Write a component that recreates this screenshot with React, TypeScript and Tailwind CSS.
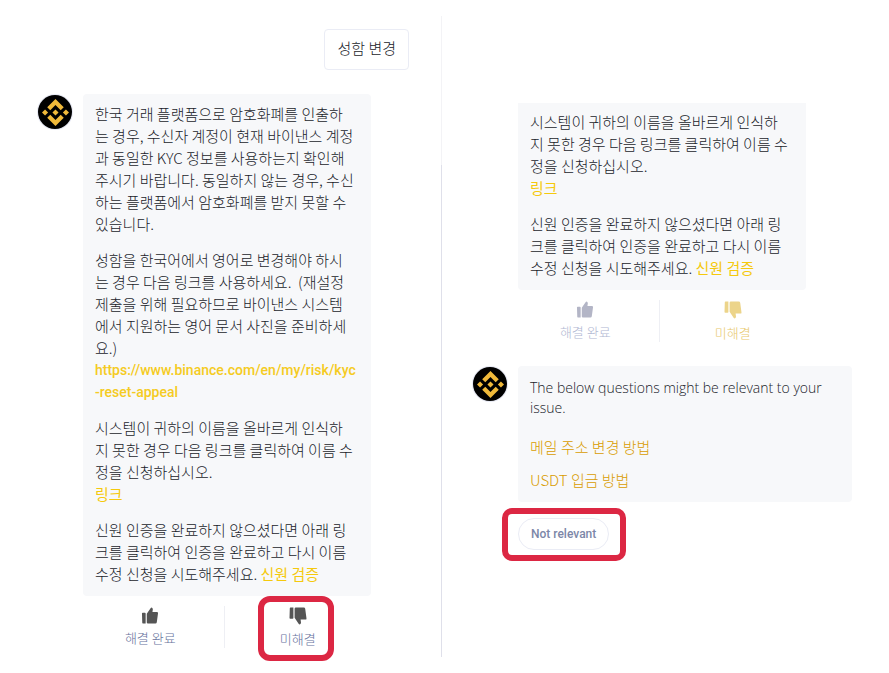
import React from "react";
import { SiBinance } from "react-icons/si";

const Avatar: React.FC = () => (
  <div className="w-9 h-9 shrink-0 rounded-full bg-[#e6e8f3] p-px">
    <div className="w-full h-full rounded-full bg-black flex items-center justify-center">
      <SiBinance size={27} className="text-[#f0b93a]" />
    </div>
  </div>
);

const Thumb: React.FC<{ down?: boolean }> = ({ down }) => (
  <svg viewBox="0 0 18 18" width="18" height="18" fill="currentColor" className={down ? "-scale-y-100" : ""} aria-hidden="true">
    <path d="M0.5 7Q0.5 6.2 1.3 6.2H3.6Q4.4 6.2 4.4 7V17.5H1.5Q0.8 17.5 0.8 16.8Z" />
    <path d="M5.6 7.2L9.6 1.3Q10.6 0 11.6 1.2Q12 1.7 12 2.4L11.6 5.4H16.4Q17.6 5.4 17.5 6.6L16.2 16.2Q16 17.5 14.8 17.5H6.8Q5.6 17.5 5.6 16.3Z" />
  </svg>
);

const linkClass = "text-[#f5c90c] font-normal";

const NameNotice: React.FC = () => (
  <>
    <p>
      시스템이 귀하의 이름을 올바르게 인식하
      <br />지 못한 경우 다음 링크를 클릭하여 이름 수
      <br />정을 신청하십시오.
      <br />
      <a href="#name" className={linkClass}>링크</a>
    </p>
    <p>
      신원 인증을 완료하지 않으셨다면 아래 링
      <br />크를 클릭하여 인증을 완료하고 다시 이름
      <br />수정 신청을 시도해주세요. <a href="#identity" className={linkClass}>신원 검증</a>
    </p>
  </>
);

type FeedbackProps = {
  upClass: string;
  downClass: string;
  highlight?: boolean;
};

const Feedback: React.FC<FeedbackProps> = ({ upClass, downClass, highlight }) => (
  <div className="mt-[10px] flex h-[42px] w-[282px] text-[13px] leading-5">
    <button type="button" className={`flex flex-1 flex-col items-center gap-1 pt-px pr-1.5 ${upClass}`}>
      <Thumb />
      <span>해결 완료</span>
    </button>
    <div className="w-px bg-[#eeeff4]" />
    <button type="button" className={`flex flex-1 flex-col items-center pt-px pl-1.5 ${downClass}`}>
      <span className="relative flex flex-col items-center gap-1">
        <Thumb down />
        <span>미해결</span>
        {highlight && <span className="absolute -top-[11px] -bottom-3 -left-[22px] -right-[18px] rounded-xl border-6 border-[#dc2743]" />}
      </span>
    </button>
  </div>
);

export default function App() {
  return (
    <main className="grid grid-cols-[441fr_1px_447fr] bg-white py-4 text-[15px] leading-[22px] font-light text-[#1a1c2a] font-['Noto_Sans_CJK_KR',sans-serif]">
      <section className="pt-[13px] pl-[37px] pr-8">
        <div className="flex justify-end">
          <p className="rounded-[4px] border border-[#eaecf5] px-3 pt-[7px] pb-[10px]">성함 변경</p>
        </div>

        <div className="mt-6 flex items-start gap-[10px]">
          <Avatar />
          <div>
            <div className="w-[288px] space-y-[14px] rounded-[4px] bg-[#f7f8fa] px-3 pt-[9px] pb-[11px]">
              <p>
                한국 거래 플랫폼으로 암호화폐를 인출하
                <br />는 경우, 수신자 계정이 현재 바이낸스 계정
                <br />과 동일한 KYC 정보를 사용하는지 확인해
                <br />주시기 바랍니다. 동일하지 않는 경우, 수신
                <br />하는 플랫폼에서 암호화폐를 받지 못할 수
                <br />있습니다.
              </p>
              <p>
                성함을 한국어에서 영어로 변경해야 하시
                <br />는 경우 다음 링크를 사용하세요.&nbsp; (재설정
                <br />제출을 위해 필요하므로 바이낸스 시스템
                <br />에서 지원하는 영어 문서 사진을 준비하세
                <br />요.)
                <br />
                <a href="https://www.binance.com/en/my/risk/kyc-reset-appeal" className="block whitespace-nowrap text-[14px] font-medium text-[#f5cb22] font-['Roboto',sans-serif]">
                  https://www.binance.com/en/my/risk/kyc
                  <br />
                  -reset-appeal
                </a>
              </p>
              <NameNotice />
            </div>
            <Feedback upClass="text-[#555555] [&>span]:text-[#66729c]" downClass="text-[#555555] [&>span>span]:text-[#66729c]" highlight />
          </div>
        </div>
      </section>

      <div className="flex h-[641px] flex-col">
        <div className="h-[149px] bg-[#f3f3f6]" />
        <div className="flex-1 bg-[#dfe0ea]" />
      </div>

      <section className="pt-[87px] pl-[30px] pr-[37px]">
        <div className="pl-[46px]">
          <div className="w-[288px] space-y-[14px] rounded-b-[4px] bg-[#f7f8fa] px-3 pt-2 pb-[11px]">
            <NameNotice />
          </div>
          <Feedback upClass="text-[#b3b5c6] [&>span]:text-[#b0b7d2]" downClass="text-[#ecd48a] [&>span>span]:text-[#e8c86a]" />
        </div>

        <div className="mt-6 flex items-start gap-[10px]">
          <Avatar />
          <div className="flex-1">
            <div className="rounded-[4px] bg-[#f7f8fa] px-3 pt-3 pb-[11px]">
              <p className="text-[14px] leading-5 font-light font-['Open_Sans',sans-serif]">The below questions might be relevant to your issue.</p>
              <ul className="mt-[18px] space-y-[11px] text-[#d99c00]">
                <li>
                  <a href="#email">메일 주소 변경 방법</a>
                </li>
                <li>
                  <a href="#usdt">USDT 입금 방법</a>
                </li>
              </ul>
            </div>
            <button type="button" className="relative mt-4 h-8 rounded-full border border-[#eaecf5] px-3 text-[12px] font-medium text-[#7c87a8] font-['Roboto',sans-serif]">
              Not relevant
              <span className="absolute -top-[11px] -bottom-3 -left-[17px] -right-[18px] rounded-[10px] border-6 border-[#dc2743]" />
            </button>
          </div>
        </div>
      </section>
    </main>
  );
}
